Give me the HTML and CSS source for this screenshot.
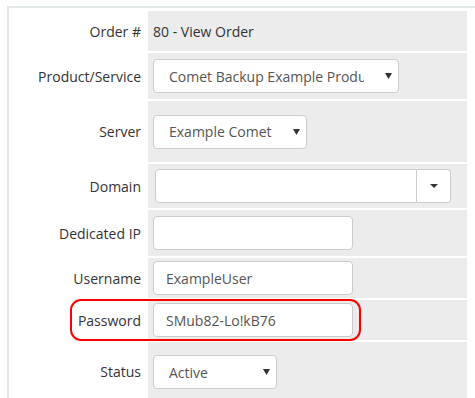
FILE: index.html
```html
<!DOCTYPE html>
<html lang="en">
<head>
  <meta charset="UTF-8">
  <meta name="viewport" content="width=device-width, initial-scale=1.0">
  <title>View Order</title>
  <link rel="stylesheet" href="styles.css">
</head>
<body>
  <div class="order-card">
    <div class="field-row">
      <div class="field-label">Order #</div>
      <div class="field-value">80 - View Order</div>
    </div>

    <div class="field-row row-medium">
      <div class="field-label">Product/Service</div>
      <div class="field-value">
        <span class="select-wrap">
          <select class="form-control select-product">
            <option>Comet Backup Example Product</option>
          </select>
          <svg class="select-arrow" width="7" height="6" viewBox="0 0 7 6"><path d="M0 0H7L3.5 6Z" fill="#333"/></svg>
        </span>
      </div>
    </div>

    <div class="field-row row-tall">
      <div class="field-label">Server</div>
      <div class="field-value">
        <span class="select-wrap">
          <select class="form-control select-server">
            <option>Example Comet</option>
          </select>
          <svg class="select-arrow" width="7" height="6" viewBox="0 0 7 6"><path d="M0 0H7L3.5 6Z" fill="#333"/></svg>
        </span>
      </div>
    </div>

    <div class="field-row row-domain">
      <div class="field-label">Domain</div>
      <div class="field-value">
        <div class="input-group">
          <input type="text" class="form-control">
          <span class="dropdown-btn"><span class="caret"></span></span>
        </div>
      </div>
    </div>

    <div class="field-row row-medium">
      <div class="field-label">Dedicated IP</div>
      <div class="field-value">
        <input type="text" class="form-control input-text">
      </div>
    </div>

    <div class="field-row">
      <div class="field-label">Username</div>
      <div class="field-value">
        <input type="text" class="form-control input-text" value="ExampleUser">
      </div>
    </div>

    <div class="field-row">
      <div class="field-label">Password</div>
      <div class="field-value">
        <input type="text" class="form-control input-text" value="SMub82-Lo!kB76">
      </div>
      <!-- red callout around the password row -->
      <div class="highlight"></div>
    </div>

    <div class="field-row row-last">
      <div class="field-label">Status</div>
      <div class="field-value">
        <span class="select-wrap">
          <select class="form-control select-status">
            <option>Active</option>
          </select>
          <svg class="select-arrow" width="7" height="6" viewBox="0 0 7 6"><path d="M0 0H7L3.5 6Z" fill="#333"/></svg>
        </span>
      </div>
    </div>
  </div>
</body>
</html>
```

FILE: styles.css
```css
body {
  margin: 0;
  font-family: "Open Sans", Arial, sans-serif;
  font-size: 14px;
  color: #333;
  background-color: #fff;
  overflow: hidden;
}

.order-card {
  display: flex;
  flex-direction: column;
  gap: 2px;
  margin: 6px 0 0 7px;
  padding-top: 3px;
  border-top: 2px solid #e2e7e9;
  border-left: 2px solid #e2e7e9;
}

.field-row {
  position: relative;
  display: flex;
  height: 40px;
}

.row-medium {
  height: 46px;
}

.row-domain {
  height: 44px;
}

.row-tall {
  height: 61px;
}

/* last row is cut by the bottom of the window */
.row-last {
  height: 56px;
}

.row-last .field-label,
.row-last .field-value {
  align-items: flex-start;
  padding-top: 13px;
}

.row-last .field-label {
  line-height: 34px;
}

.field-label {
  width: 139px;
  padding-right: 7px;
  box-sizing: border-box;
  display: flex;
  align-items: center;
  justify-content: flex-end;
}

.field-value {
  width: 319px;
  padding-left: 5px;
  box-sizing: border-box;
  display: flex;
  align-items: center;
  background-color: #ececec;
}

.form-control {
  height: 34px;
  box-sizing: border-box;
  padding: 6px 12px;
  font-family: inherit;
  font-size: 14px;
  color: #555;
  background-color: #fff;
  border: 1px solid #ccc;
  border-radius: 4px;
  outline: none;
}

.input-text {
  width: 200px;
}

.select-wrap {
  position: relative;
  display: inline-block;
}

select.form-control {
  appearance: none;
  -webkit-appearance: none;
  padding: 6px 34px 6px 15px;
}

.select-product {
  width: 246px;
}

.select-server {
  width: 154px;
}

.select-status {
  width: 124px;
}

.select-arrow {
  position: absolute;
  right: 7px;
  top: 14px;
}

.input-group {
  display: flex;
  width: 296px;
  margin-left: 2px;
}

.input-group .form-control {
  flex: 1;
  min-width: 0;
  border-radius: 4px 0 0 4px;
}

.dropdown-btn {
  width: 34px;
  height: 34px;
  box-sizing: border-box;
  display: flex;
  align-items: center;
  justify-content: center;
  background-color: #fff;
  border: 1px solid #ccc;
  border-left: none;
  border-radius: 0 4px 4px 0;
}

.caret {
  width: 0;
  height: 0;
  border-top: 4px solid #333;
  border-left: 4px solid transparent;
  border-right: 4px solid transparent;
}

.highlight {
  position: absolute;
  left: 61px;
  top: -1px;
  width: 291px;
  height: 42px;
  box-sizing: border-box;
  border: 2px solid #f00;
  border-radius: 11px;
  pointer-events: none;
}
```
